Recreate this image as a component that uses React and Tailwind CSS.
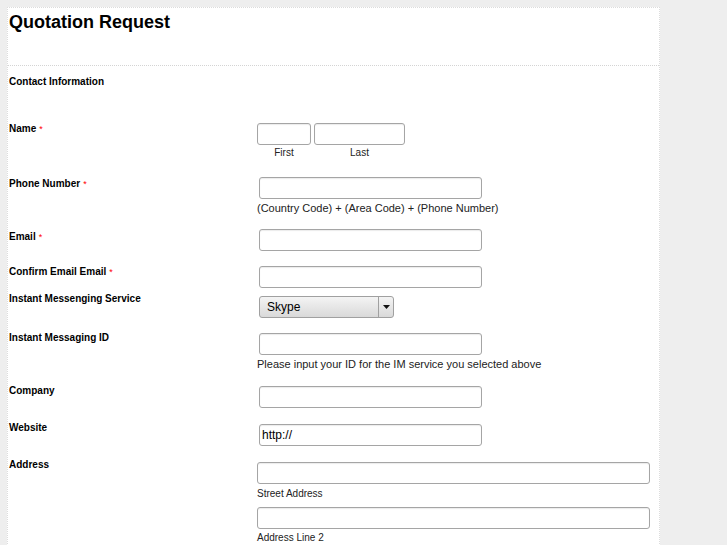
import React from 'react';

const Req = () => <span className="text-[#ff0000] font-normal text-[9px] align-top ml-[3px]">*</span>;

const inputCls = "block h-[22px] border border-[#a5a5a5] rounded-[3px] bg-white shadow-[inset_0_1px_1px_rgba(0,0,0,0.08)] px-[2px] text-[12px] text-black outline-none";

const Row = ({ h, label, req, labelTop = 0, children }) => (
  <div className="flex" style={{ height: h }}>
    <div className="w-[249px] shrink-0 pl-[1px] text-[10px] font-bold leading-[12px] text-black" style={{ marginTop: labelTop }}>
      {label}
      {req && <Req />}
    </div>
    <div className="flex-1">{children}</div>
  </div>
);

const App = () => {
  return (
    <div className="min-h-screen bg-[#eeeeee] pt-[7px] pl-[7px] font-['Liberation_Sans',Arial,sans-serif] text-black">
      <div className="w-[653px] bg-white border border-dotted border-[#dcdcdc] border-b-0 pb-[20px]">
        <h1 className="h-[57px] pt-[4px] pl-[1px] text-[18px] font-bold leading-[20px]">Quotation Request</h1>
        <div className="border-t border-dotted border-[#d4d4d4]" />
        <div className="pt-[10px] pl-[1px] text-[10px] font-bold leading-[12px] h-[57px]">Contact Information</div>

        <Row h={54} label="Name" req labelTop={0}>
          <div className="flex gap-[3px]">
            <div className="flex flex-col items-center">
              <input className={inputCls + " w-[54px]"} />
              <span className="text-[10px] leading-[12px] mt-[2px] text-[#222]">First</span>
            </div>
            <div className="flex flex-col items-center">
              <input className={inputCls + " w-[91px]"} />
              <span className="text-[10px] leading-[12px] mt-[2px] text-[#222]">Last</span>
            </div>
          </div>
        </Row>

        <Row h={52} label="Phone Number" req labelTop={1}>
          <input className={inputCls + " w-[223px] ml-[2px]"} />
          <div className="text-[11px] leading-[13px] mt-[3px] text-[#222]">(Country Code) + (Area Code) + (Phone Number)</div>
        </Row>

        <Row h={37} label="Email" req labelTop={2}>
          <input className={inputCls + " w-[223px] ml-[2px]"} />
        </Row>

        <Row h={30} label="Confirm Email Email" req labelTop={0}>
          <input className={inputCls + " w-[223px] ml-[2px]"} />
        </Row>

        <Row h={37} label="Instant Messenging Service" labelTop={-3}>
          <div className="ml-[2px] flex w-[135px] h-[22px] border border-[#a0a0a0] rounded-[3px] bg-gradient-to-b from-[#f4f4f4] to-[#d9d9d9] overflow-hidden">
            <div className="flex-1 pl-[7px] text-[12px] leading-[20px]">Skype</div>
            <div className="w-[15px] border-l border-[#a0a0a0] flex items-center justify-center">
              <svg width="7" height="4" viewBox="0 0 7 4"><path d="M0 0h7L3.5 4z" fill="#111" /></svg>
            </div>
          </div>
        </Row>

        <Row h={53} label="Instant Messaging ID" labelTop={-1}>
          <input className={inputCls + " w-[223px] ml-[2px]"} />
          <div className="text-[11px] leading-[13px] mt-[3px] text-[#222]">Please input your ID for the IM service you selected above</div>
        </Row>

        <Row h={38} label="Company" labelTop={-1}>
          <input className={inputCls + " w-[223px] ml-[2px]"} />
        </Row>

        <Row h={38} label="Website" labelTop={-2}>
          <input className={inputCls + " w-[223px] ml-[2px]"} defaultValue="http://" />
        </Row>

        <Row h={90} label="Address" labelTop={-3}>
          <input className={inputCls + " w-[393px]"} />
          <div className="text-[10px] leading-[12px] mt-[4px] text-[#222]">Street Address</div>
          <input className={inputCls + " w-[393px] mt-[7px]"} />
          <div className="text-[10px] leading-[12px] mt-[3px] text-[#222]">Address Line 2</div>
        </Row>
      </div>
    </div>
  );
};

export default App;
